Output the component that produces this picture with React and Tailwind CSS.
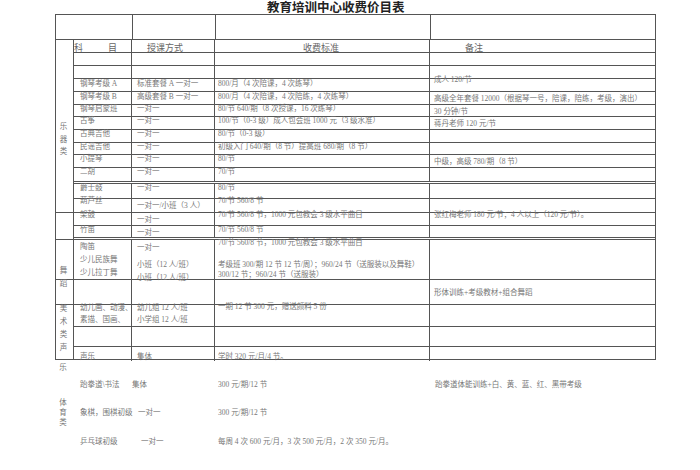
import React from "react";

function Row({ cls, a, b, c, d }) {
  return (
    <div className={"grid grid-cols-[58px_83px_215px_minmax(0,1fr)] shrink-0 " + cls}>
      <div className="border-r border-[#555] pl-[6px] whitespace-nowrap">{a}</div>
      <div className="border-r border-[#555] pl-[5px] whitespace-nowrap">{b}</div>
      <div className="border-r border-[#555] pl-[3px] whitespace-nowrap">{c}</div>
      <div className="pl-[4px] whitespace-nowrap">{d}</div>
    </div>
  );
}

function T({ children, cls = "" }) {
  return <div className={"leading-[8px] " + cls}>{children}</div>;
}

const line = "border-b border-[#555]";
const dbl = "border-b-[3px] border-double border-[#555]";

export default function App() {
  return (
    <div className="relative w-[700px] h-[470px] overflow-hidden bg-white text-[7.5px] text-[#777] font-['Liberation_Serif','Noto_Sans_CJK_SC',serif]">
      <div className="h-[14px] pl-[267px] text-[12.5px] leading-[14px] font-bold text-[#222] whitespace-nowrap font-['Noto_Sans_CJK_SC',sans-serif]">
        教育培训中心收费价目表
      </div>

      <div className="ml-[55px] w-[601px]">
        <div className="grid grid-cols-[77px_83px_215px_minmax(0,1fr)] h-[26px] border border-[#555]">
          <div className="border-r border-[#555]" />
          <div className="border-r border-[#555]" />
          <div className="border-r border-[#555]" />
          <div />
        </div>

        <div className="flex h-[320px] border-x border-b border-[#555]">
          <div className="w-[18px] shrink-0 border-r border-[#555] flex flex-col items-center">
            <div className={"h-[173px] w-full flex flex-col items-center pt-[81px] pr-[2px] leading-[12.5px] " + line}>
              <span>乐</span>
              <span>器</span>
              <span>类</span>
            </div>
            <div className={"h-[27px] w-full " + line} />
            <div className={"h-[40px] w-full flex flex-col items-center pt-[24px] pr-[2px] leading-[13px] " + line}>
              <span>舞</span>
              <span>蹈</span>
            </div>
            <div className={"h-[25px] w-full " + line} />
            <div className="flex-1 w-full flex flex-col items-center pr-[2px] leading-[13px]">
              <span className="-mt-[3px]">美</span>
              <span>术</span>
              <span>类</span>
              <span>声</span>
            </div>
          </div>

          <div className="flex-1 flex flex-col">
            <div className={"grid grid-cols-[58px_83px_215px_minmax(0,1fr)] shrink-0 h-[13px] text-[9px] text-[#666] leading-[9px] " + line}>
              <div className="border-r border-[#555] pt-[4px] flex whitespace-nowrap">
                <span>科</span>
                <span className="ml-[25px]">目</span>
              </div>
              <div className="border-r border-[#555] pt-[4px] pl-[15px] whitespace-nowrap">授课方式</div>
              <div className="border-r border-[#555] pt-[4px] pl-[88px] whitespace-nowrap">收费标准</div>
              <div className="pt-[4px] pl-[35px] whitespace-nowrap">备注</div>
            </div>
            <Row cls={"h-[13px] " + line} />
            <Row cls={"h-[13px] " + line} />
            <Row
              cls={"h-[13px] " + line}
              a={<T cls="pt-[1px]">钢琴考级 A</T>}
              b={<T cls="pt-[1px]">标准套餐 A 一对一</T>}
              c={<T cls="pt-[1px]">800/月（4 次陪课，4 次练琴）</T>}
              d={<T cls="-mt-[3px]">成人 120/节</T>}
            />
            <Row
              cls={"h-[13px] " + line}
              a={<T cls="pt-[1px]">钢琴考级 B</T>}
              b={<T cls="pt-[1px]">高级套餐 B 一对一</T>}
              c={<T cls="pt-[1px]">800/月（4 次陪课，4 次陪练，4 次练琴）</T>}
              d={<T cls="pt-[3px]">高级全年套餐 12000（根据琴一号，陪课，陪练，考级，演出）</T>}
            />
            <Row
              cls={"h-[12px] " + line}
              a={<T>钢琴启蒙班</T>}
              b={<T>一对一</T>}
              c={<T>80/节 640/期（8 次授课，16 次练琴）</T>}
              d={<T cls="pt-[3px]">30 分钟/节</T>}
            />
            <Row
              cls={"h-[13px] " + line}
              a={<T>古筝</T>}
              b={<T>一对一</T>}
              c={<T>100/节（0-3 级）成人包会班 1000 元（3 级水准）</T>}
              d={<T cls="pt-[3px]">蒋丹老师 120 元/节</T>}
            />
            <Row
              cls={"h-[13px] " + line}
              a={<T>古典吉他</T>}
              b={<T>一对一</T>}
              c={<T>80/节（0-3 级）</T>}
            />
            <Row
              cls={"h-[12px] " + line}
              a={<T>民谣吉他</T>}
              b={<T>一对一</T>}
              c={<T>初级入门 640/期（8 节）提高班 680/期（8 节）</T>}
            />
            <Row
              cls={"h-[13px] " + line}
              a={<T>小提琴</T>}
              b={<T>一对一</T>}
              c={<T>80/节</T>}
              d={<T cls="pt-[3px]">中级，高级 780/期（8 节）</T>}
            />
            <Row
              cls={"h-[16px] " + dbl}
              a={<T>二胡</T>}
              b={<T>一对一</T>}
              c={<T>70/节</T>}
            />
            <Row
              cls={"h-[15px] " + line}
              a={<T>爵士鼓</T>}
              b={<T>一对一</T>}
              c={<T>80/节</T>}
            />
            <Row
              cls={"h-[14px] " + line}
              a={<T cls="-mt-[2px]">葫芦丝</T>}
              b={<T cls="pt-[3px]">一对一/小班（3 人）</T>}
              c={<T cls="-mt-[2px]">70/节 560/8 节</T>}
            />
            <Row
              cls={"h-[13px] " + line}
              a={<T cls="-mt-[2px]">架鼓</T>}
              b={<T cls="pt-[3px]">一对一</T>}
              c={<T cls="-mt-[2px]">70/节 560/8 节，1000 元包教会 3 级水平曲目</T>}
              d={<T cls="-mt-[2px]">张红梅老师 180 元/节；4 人以上（120 元/节）。</T>}
            />
            <Row
              cls={"h-[14px] " + dbl}
              a={<T>竹笛</T>}
              b={<T cls="pt-[3px]">一对一</T>}
              c={<T>70/节 560/8 节</T>}
            />
            <Row
              cls={"h-[40px] " + line}
              a={
                <div className="flex flex-col">
                  <T cls="pt-[3px]">陶笛</T>
                  <T cls="mt-[5px]">少儿民族舞</T>
                  <T cls="mt-[5px]">少儿拉丁舞</T>
                </div>
              }
              b={
                <div className="flex flex-col">
                  <T cls="pt-[4px]">一对一</T>
                  <T cls="mt-[9px]">小班（12 人/班）</T>
                  <T cls="mt-[5px]">小班（12 人/班）</T>
                </div>
              }
              c={
                <div className="flex flex-col">
                  <T cls="-mt-[1px]">70/节 560/8 节，1000 元包教会 3 级水平曲目</T>
                  <T cls="mt-[14px]">考级班 300/期 12 节 12 节/周）；960/24 节（送服装以及舞鞋）</T>
                  <T cls="mt-[2px]">300/12 节；960/24 节（送服装）</T>
                </div>
              }
            />
            <Row
              cls={"h-[25px] " + line}
              d={<T cls="pt-[9px]">形体训练+考级教材+组合舞蹈</T>}
            />
            <Row
              cls={"h-[22px] " + line}
              a={
                <div className="flex flex-col">
                  <T cls="-mt-[1px]">幼儿画、动漫、</T>
                  <T cls="mt-[4px]">素描、国画、</T>
                </div>
              }
              b={
                <div className="flex flex-col">
                  <T cls="-mt-[1px]">幼儿组 12 人/班</T>
                  <T cls="mt-[4px]">小学组 12 人/班</T>
                </div>
              }
              c={<T cls="-mt-[2px]">一期 12 节 300 元，赠送颜料 5 份</T>}
            />
            <Row cls={"h-[20px] " + line} />
            <Row
              cls="h-[12px]"
              a={<T cls="pt-[6px]">声乐</T>}
              b={<T cls="pt-[6px]">集体</T>}
              c={<T cls="pt-[6px]">学时 320 元/月/4 节。</T>}
            />
          </div>
        </div>

        <div className="flex">
          <div className="w-[19px] shrink-0 flex flex-col items-center pr-[3px] leading-[10px]">
            <span className="mt-[3px]">乐</span>
            <span className="mt-[25px]">体</span>
            <span>育</span>
            <span>类</span>
          </div>
          <div className="flex-1 flex flex-col leading-[10px]">
            <div className="grid grid-cols-[58px_83px_215px_minmax(0,1fr)] mt-[20px] whitespace-nowrap">
              <div className="pl-[6px]">{"跆拳道\\书法"}</div>
              <div className="pl-[0px]">集体</div>
              <div className="pl-[3px]">300 元/期/12 节</div>
              <div className="pl-[5px]">跆拳道体能训练+白、黄、蓝、红、黑带考级</div>
            </div>
            <div className="grid grid-cols-[58px_83px_215px_minmax(0,1fr)] mt-[18px] whitespace-nowrap">
              <div className="pl-[6px]">象棋，围棋初级</div>
              <div className="pl-[6px]">一对一</div>
              <div className="pl-[3px]">300 元/期/12 节</div>
              <div />
            </div>
            <div className="grid grid-cols-[58px_83px_215px_minmax(0,1fr)] mt-[19px] whitespace-nowrap">
              <div className="pl-[6px]">乒乓球初级</div>
              <div className="pl-[9px]">一对一</div>
              <div className="pl-[3px]">每周 4 次 600 元/月，3 次 500 元/月，2 次 350 元/月。</div>
              <div />
            </div>
          </div>
        </div>
      </div>
    </div>
  );
}
